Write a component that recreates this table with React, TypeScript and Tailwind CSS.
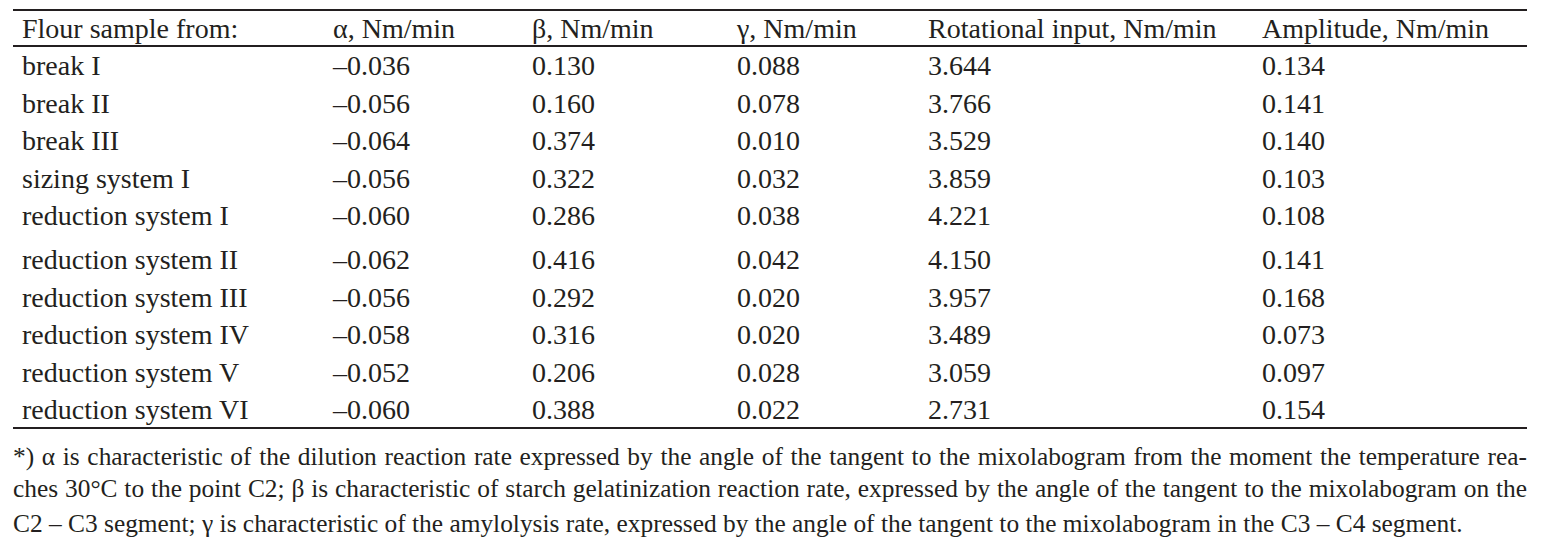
import React from "react";

const rows: [string, string, string, string, string, string][] = [
  ["break I", "–0.036", "0.130", "0.088", "3.644", "0.134"],
  ["break II", "–0.056", "0.160", "0.078", "3.766", "0.141"],
  ["break III", "–0.064", "0.374", "0.010", "3.529", "0.140"],
  ["sizing system I", "–0.056", "0.322", "0.032", "3.859", "0.103"],
  ["reduction system I", "–0.060", "0.286", "0.038", "4.221", "0.108"],
  ["reduction system II", "–0.062", "0.416", "0.042", "4.150", "0.141"],
  ["reduction system III", "–0.056", "0.292", "0.020", "3.957", "0.168"],
  ["reduction system IV", "–0.058", "0.316", "0.020", "3.489", "0.073"],
  ["reduction system V", "–0.052", "0.206", "0.028", "3.059", "0.097"],
  ["reduction system VI", "–0.060", "0.388", "0.022", "2.731", "0.154"],
];

const widths = ["w-[311px]", "w-[199px]", "w-[205px]", "w-[191px]", "w-[334px]", "w-[274px]"];

export default function App() {
  return (
    <div
      className="w-[1543px] h-[545px] bg-white text-[#231f20] pl-[13px] pt-[9px]"
      style={{ fontFamily: '"Liberation Serif", "Times New Roman", serif' }}
    >
      <div className="w-[1514px]">
        <div className="border-t-2 border-b-2 border-[#231f20] flex h-[38px] items-start text-[28px] leading-[36px]">
          {["Flour sample from:", "α, Nm/min", "β, Nm/min", "γ, Nm/min", "Rotational input, Nm/min", "Amplitude, Nm/min"].map((h, i) => (
            <div key={i} className={`${widths[i]} pl-[9px] whitespace-nowrap`}>
              {h}
            </div>
          ))}
        </div>
        <div className="border-b-2 border-[#231f20]">
          {rows.map((r, ri) => (
            <div
              key={ri}
              className={`flex text-[28px] leading-[37.5px] ${
                ri === 4 ? "h-[44px]" : ri === 9 ? "h-[36px]" : "h-[37.5px]"
              }`}
            >
              {r.map((c, ci) => (
                <div key={ci} className={`${widths[ci]} pl-[9px] whitespace-nowrap`}>
                  {c}
                </div>
              ))}
            </div>
          ))}
        </div>
        <div className="text-[25.4px] leading-[32px] pt-[11px]">
          <div className="text-justify [text-align-last:justify] whitespace-nowrap">
            *) α is characteristic of the dilution reaction rate expressed by the angle of the tangent to the mixolabogram from the moment the temperature rea-
          </div>
          <div className="text-justify [text-align-last:justify] whitespace-nowrap">
            ches 30°C to the point C2; β is characteristic of starch gelatinization reaction rate, expressed by the angle of the tangent to the mixolabogram on the
          </div>
          <div className="pt-[3px] whitespace-nowrap">
            C2 – C3 segment; γ is characteristic of the amylolysis rate, expressed by the angle of the tangent to the mixolabogram in the C3 – C4 segment.
          </div>
        </div>
      </div>
    </div>
  );
}
